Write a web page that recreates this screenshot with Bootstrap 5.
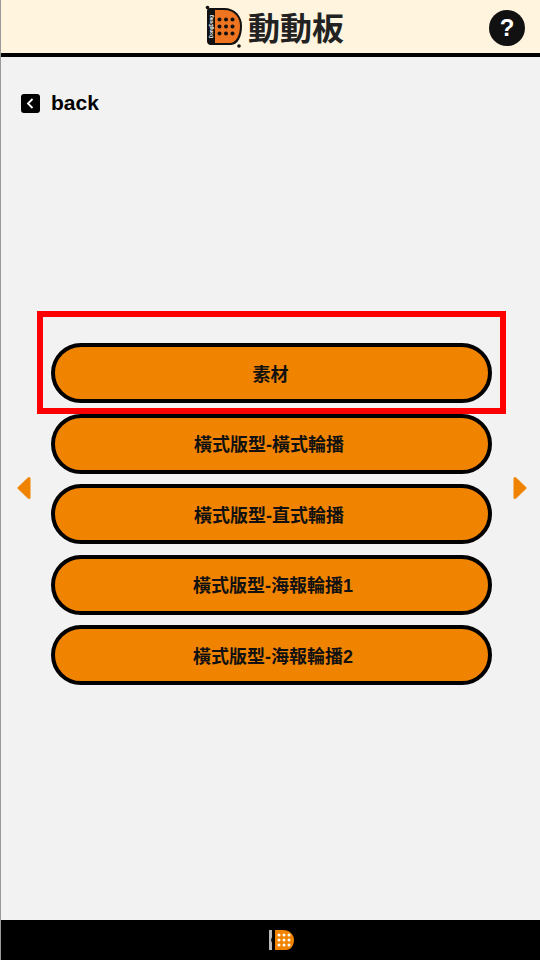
<!DOCTYPE html>
<html lang="zh-Hant">
<head>
  <meta charset="UTF-8">
  <title>動動板</title>
  <meta name="viewport" content="width=device-width, initial-scale=1">
  <link href="https://cdn.jsdelivr.net/npm/bootstrap@5.3.3/dist/css/bootstrap.min.css" rel="stylesheet">
  <style>
    body { height: 960px; background: #f2f2f2; font-family: "Liberation Sans", "Noto Sans CJK TC", sans-serif; overflow: hidden; border-left: 1px solid #999; }
    .top-bar { height: 57px; background: #fff4de; border-bottom: 4px solid #000; position: relative; padding-left: 8px; }
    .brand-name { font-size: 32px; font-weight: 700; color: #222; line-height: 1; margin-left: 5px; margin-top: 5px; }
    .help-btn { position: absolute; right: 15px; top: 10px; width: 36px; height: 36px; border-radius: 50%; background: #111; color: #fff; font-size: 24px; font-weight: 700; line-height: 36px; text-align: center; }
    .main-area { height: 863px; position: relative; }
    .back-row { padding: 33px 0 0 20px; height: 286px; font-size: 21px; font-weight: 700; color: #000; line-height: 26px; gap: 11px; }
    .slide-list { width: 441px; margin-left: 50px; gap: 10.5px; }
    .slide-btn { height: 60px; width: 100%; background: #f08300; border: 4px solid #000; border-radius: 30px; color: #111; font-size: 18px; font-weight: 700; padding: 4px 5px 0 0; }
    .slide-btn:hover { background: #f08300; border-color: #000; color: #111; }
    .slide-first { padding-right: 2px; }
    .slide-num { padding-right: 0; padding-left: 3px; }
    .mark-box { position: absolute; left: 36px; top: 254px; width: 469px; height: 103px; border: 6px solid #f00; pointer-events: none; }
    .nav-arrow { position: absolute; top: 419px; }
    .nav-prev { left: 15px; }
    .nav-next { left: 511px; }
    .foot-bar { height: 40px; background: #000; padding-left: 22px; }
    .logo-tag { font-size: 4.5px; font-weight: 700; fill: #fff; }
  </style>
</head>
<body>

<!-- header -->
<div class="top-bar d-flex align-items-center justify-content-center">
  <svg width="38" height="43" viewBox="0 0 38 43">
    <circle cx="2.5" cy="2.5" r="1.8" fill="#111"/>
    <circle cx="34" cy="41" r="1.8" fill="#111"/>
    <path d="M5 3H19C30 3 37 11 37 21C37 31 33 40 26 40H6C3 40 2 38 2 36V6C2 4 3 3 5 3Z" fill="#111"/>
    <path d="M10 5H19C29 5 35 12 35 21C35 30 31 38 25 38H10Z" fill="#ee7420"/>
    <text class="logo-tag" transform="translate(7.5 33) rotate(-90)">DongDong</text>
    <g fill="#111">
      <circle cx="14.5" cy="14.5" r="2"/><circle cx="21" cy="14.5" r="2"/><circle cx="27.5" cy="14.5" r="2"/>
      <circle cx="14.5" cy="21.5" r="2"/><circle cx="21" cy="21.5" r="2"/><circle cx="27.5" cy="21.5" r="2"/>
      <circle cx="14.5" cy="28.5" r="2"/><circle cx="21" cy="28.5" r="2"/><circle cx="27.5" cy="28.5" r="2"/>
    </g>
  </svg>
  <span class="brand-name">動動板</span>
  <div class="help-btn">?</div>
</div>

<div class="main-area">
  <div class="back-row d-flex align-items-start">
    <svg class="mt-1" width="19" height="19" viewBox="0 0 19 19">
      <rect width="19" height="19" rx="3" fill="#000"/>
      <path d="M11.5 5L7 9.5L11.5 14" fill="none" stroke="#fff" stroke-width="1.8"/>
    </svg>
    <span>back</span>
  </div>

  <div class="slide-list d-flex flex-column">
    <button class="btn slide-btn slide-first" type="button">素材</button>
    <button class="btn slide-btn" type="button">橫式版型-橫式輪播</button>
    <button class="btn slide-btn" type="button">橫式版型-直式輪播</button>
    <button class="btn slide-btn slide-num" type="button">橫式版型-海報輪播1</button>
    <button class="btn slide-btn slide-num" type="button">橫式版型-海報輪播2</button>
  </div>

  <div class="mark-box"></div>

  <svg class="nav-arrow nav-prev" width="16" height="24" viewBox="0 0 16 24">
    <path d="M13 2.5V21.5L3 12Z" fill="#f08300" stroke="#f08300" stroke-width="3" stroke-linejoin="round"/>
  </svg>
  <svg class="nav-arrow nav-next" width="16" height="24" viewBox="0 0 16 24">
    <path d="M3 2.5V21.5L13 12Z" fill="#f08300" stroke="#f08300" stroke-width="3" stroke-linejoin="round"/>
  </svg>
</div>

<!-- footer -->
<div class="foot-bar d-flex align-items-center justify-content-center">
  <svg width="25" height="22" viewBox="0 0 25 22">
    <path d="M0 1H3V8L2 11L3 14V21H0Z" fill="#bbb"/>
    <path d="M6 1H14C21 1 25 6 25 11C25 16 22 21 17 21H6Z" fill="#f08300"/>
    <g fill="#fff">
      <circle cx="10" cy="6" r="1.5"/><circle cx="15" cy="6" r="1.5"/><circle cx="20" cy="6" r="1.5"/>
      <circle cx="10" cy="11" r="1.5"/><circle cx="15" cy="11" r="1.5"/><circle cx="20" cy="11" r="1.5"/>
      <circle cx="10" cy="16" r="1.5"/><circle cx="15" cy="16" r="1.5"/><circle cx="20" cy="16" r="1.5"/>
    </g>
  </svg>
</div>

<script src="https://cdn.jsdelivr.net/npm/bootstrap@5.3.3/dist/js/bootstrap.bundle.min.js"></script>
</body>
</html>
